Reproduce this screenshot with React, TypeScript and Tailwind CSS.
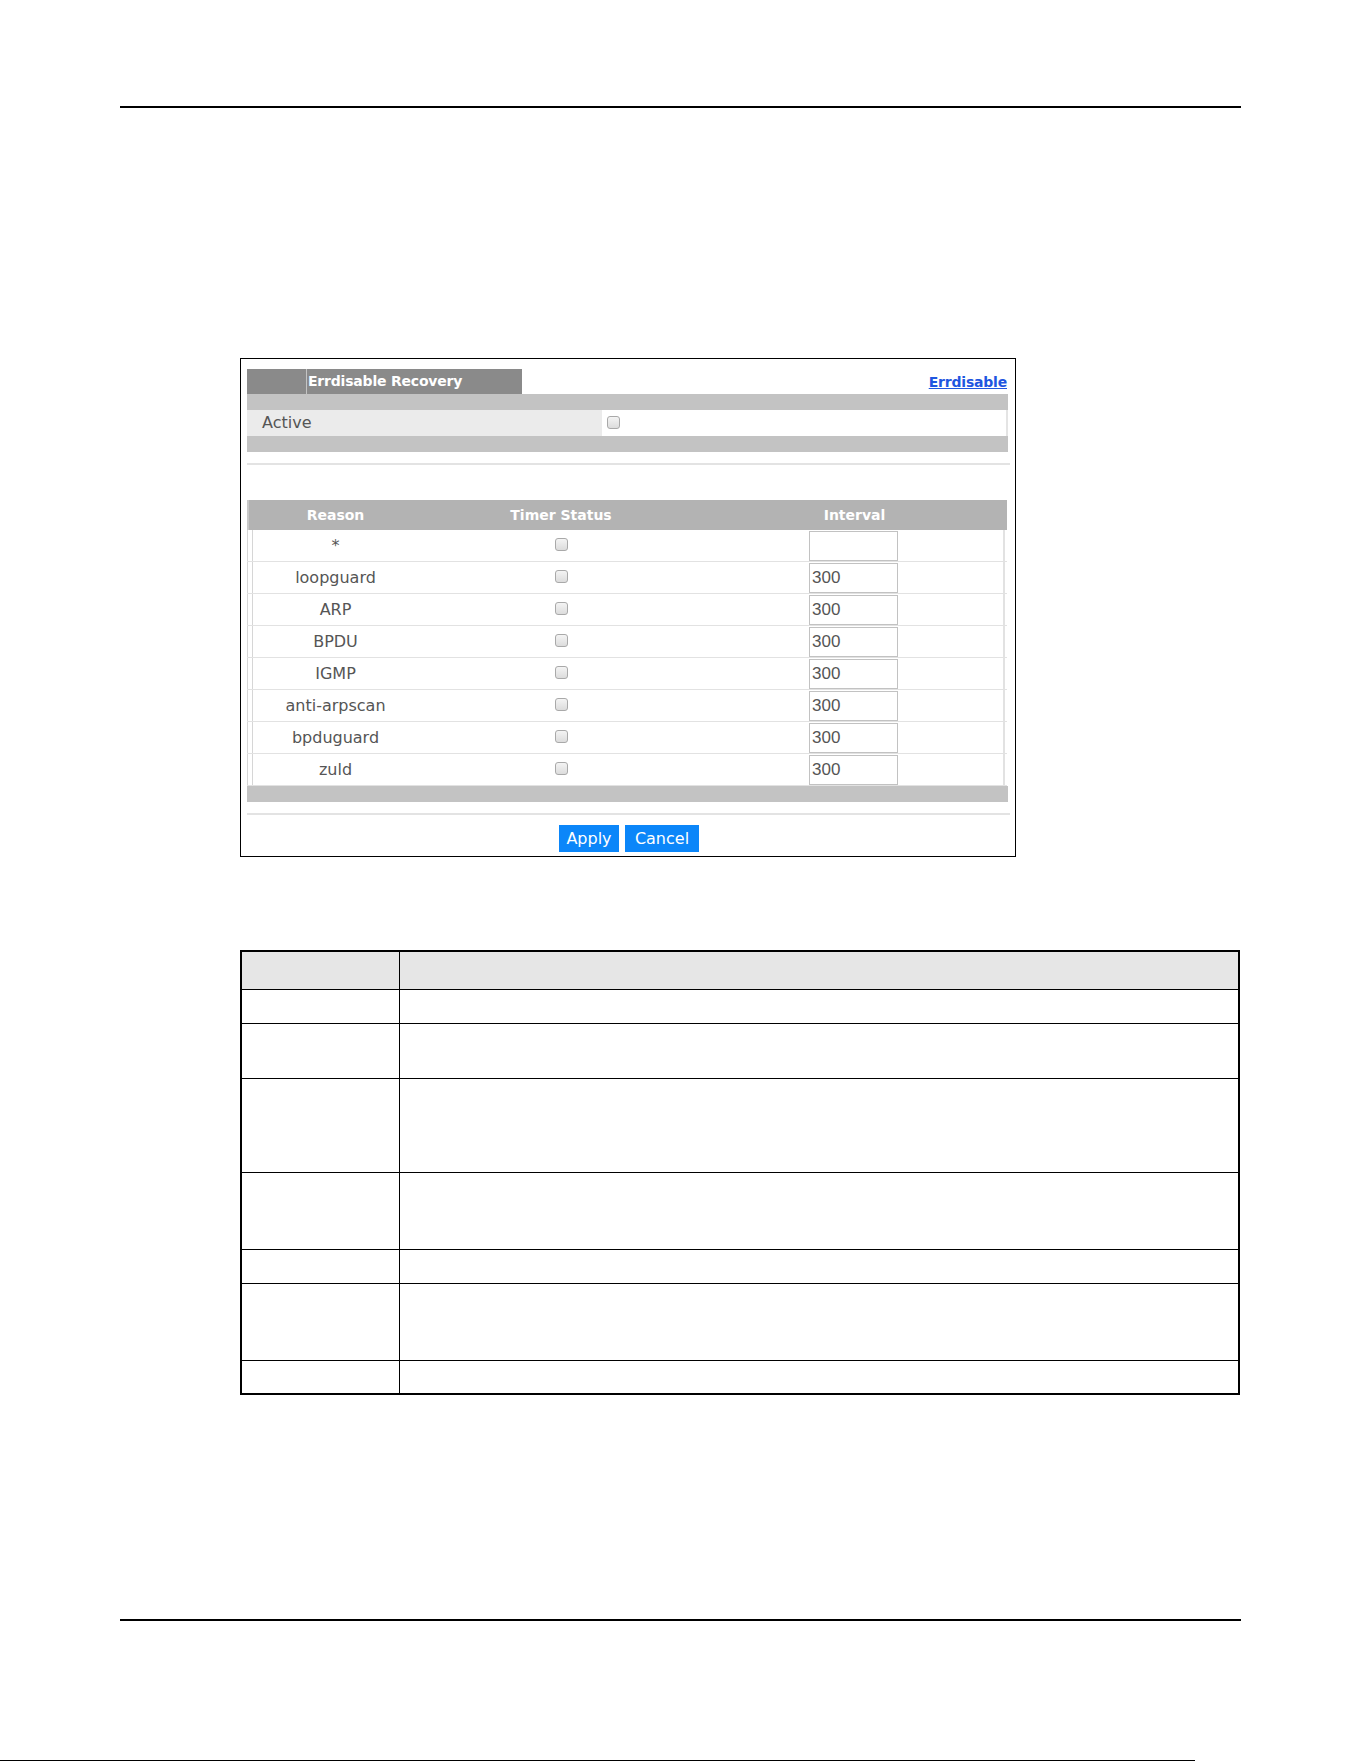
import { useState } from 'react';

const reasons = ['*', 'loopguard', 'ARP', 'BPDU', 'IGMP', 'anti-arpscan', 'bpduguard', 'zuld'];

// row heights of the field description table (border included), header excluded
const descRows = ['h-[34px]', 'h-[55px]', 'h-[94px]', 'h-[77px]', 'h-[34px]', 'h-[77px]'];

function Checkbox({ checked, onClick }: { checked: boolean; onClick: () => void }) {
    return (
        <span
            onClick={onClick}
            className={
                checked
                    ? "block w-[13px] h-[13px] rounded-[3px] border border-[#3b7bd6] bg-[#4a90e2]"
                    : "block w-[13px] h-[13px] rounded-[3px] border border-[#a9a9a9] bg-gradient-to-b from-[#f4f4f4] to-[#dcdcdc]"
            }
        />
    );
}

export default function App() {
    const [active, setActive] = useState(false);
    const [timers, setTimers] = useState<boolean[]>(reasons.map(() => false));

    return (
        <div className="w-[1361px] h-[1761px] bg-white overflow-hidden font-['DejaVu_Sans',sans-serif]">
            {/* page header rule */}
            <div className="mt-[106px] ml-[120px] w-[1121px] h-[2px] bg-black" />

            {/* screen capture frame */}
            <div className="mt-[250px] ml-[240px] w-[776px] h-[499px] border border-black pt-[10px] pl-[6px] pr-[7px]">
                <div className="flex justify-between items-end h-[25px]">
                    <div className="flex h-[25px] w-[275px] bg-[#8a8a8a]">
                        <div className="w-[60px] h-full border-r border-[#c4c4c4]" />
                        <span className="pl-[1px] text-[14px] leading-[25px] font-bold text-white tracking-[-0.2px]">
                            Errdisable Recovery
                        </span>
                    </div>
                    <a href="#" className="mb-[4px] mr-[1px] text-[14px] leading-[16px] font-bold text-[#1f56e0] underline tracking-[-0.2px]">
                        Errdisable
                    </a>
                </div>

                <div className="h-[16px] bg-[#c3c3c3]" />
                <div className="flex h-[26px] bg-[#c3c3c3]">
                    <div className="w-[355px] bg-[#ebebeb] pl-[15px] text-[16px] leading-[26px] text-[#555]">Active</div>
                    <div className="flex-1 bg-white border-r-2 border-[#e4e4e4] pl-[5px] pt-[6px]">
                        <Checkbox checked={active} onClick={() => setActive(!active)} />
                    </div>
                </div>
                <div className="h-[16px] bg-[#c3c3c3]" />

                <div className="mt-[11px] w-[763px] h-[2px] bg-[#e3e3e3]" />

                <div className="mt-[35px] w-[760px]">
                    <div className="flex h-[30px] bg-[#b3b3b3] text-white font-bold text-[14px] leading-[30px]">
                        <div className="w-[6px] border-l-2 border-[#c9c9c9]" />
                        <div className="w-[165px] text-center">Reason</div>
                        <div className="w-[286px] text-center">Timer Status</div>
                        <div className="w-[301px] text-center">Interval</div>
                    </div>
                    {reasons.map((r, i) => (
                        <div key={r} className="flex h-[32px] border-b border-[#e2e2e2] text-[16px] text-[#555]">
                            <div className="w-[6px] border-x border-[#d6d6d6]" />
                            <div className="w-[165px] flex items-center justify-center">{r}</div>
                            <div className="w-[286px] flex items-center justify-center pb-[3px]">
                                <Checkbox
                                    checked={timers[i]}
                                    onClick={() => setTimers(timers.map((t, j) => (j === i ? !t : t)))}
                                />
                            </div>
                            <div className="w-[301px] flex items-center justify-center border-r-2 border-[#e2e2e2]">
                                <input
                                    defaultValue={i === 0 ? '' : '300'}
                                    className="w-[89px] h-[30px] border border-[#c2c2c2] px-[2px] text-[17px] text-[#555] font-['Liberation_Sans',sans-serif] outline-none"
                                />
                            </div>
                        </div>
                    ))}
                </div>
                <div className="h-[16px] bg-[#c3c3c3]" />

                <div className="mt-[11px] w-[763px] h-[2px] bg-[#e3e3e3]" />

                <div className="mt-[10px] flex justify-center gap-[6px] pl-[3px]">
                    <button className="w-[60px] h-[27px] bg-[#0b86f9] text-white text-[16px]">Apply</button>
                    <button className="w-[74px] h-[27px] bg-[#0b86f9] text-white text-[16px]">Cancel</button>
                </div>
            </div>

            {/* field description table */}
            <div className="mt-[93px] ml-[240px] w-[1000px] border-2 border-black">
                <div className="flex h-[38px] border-b border-black bg-[#e6e6e6]">
                    <div className="w-[158px] border-r border-black" />
                    <div className="flex-1" />
                </div>
                {descRows.map((h, i) => (
                    <div key={i} className={"flex border-b border-black " + h}>
                        <div className="w-[158px] border-r border-black" />
                        <div className="flex-1" />
                    </div>
                ))}
                <div className="flex h-[32px]">
                    <div className="w-[158px] border-r border-black" />
                    <div className="flex-1" />
                </div>
            </div>

            {/* page footer rule */}
            <div className="mt-[224px] ml-[120px] w-[1121px] h-[2px] bg-black" />
            <div className="mt-[139px] w-[1195px] h-px bg-black" />
        </div>
    );
}
